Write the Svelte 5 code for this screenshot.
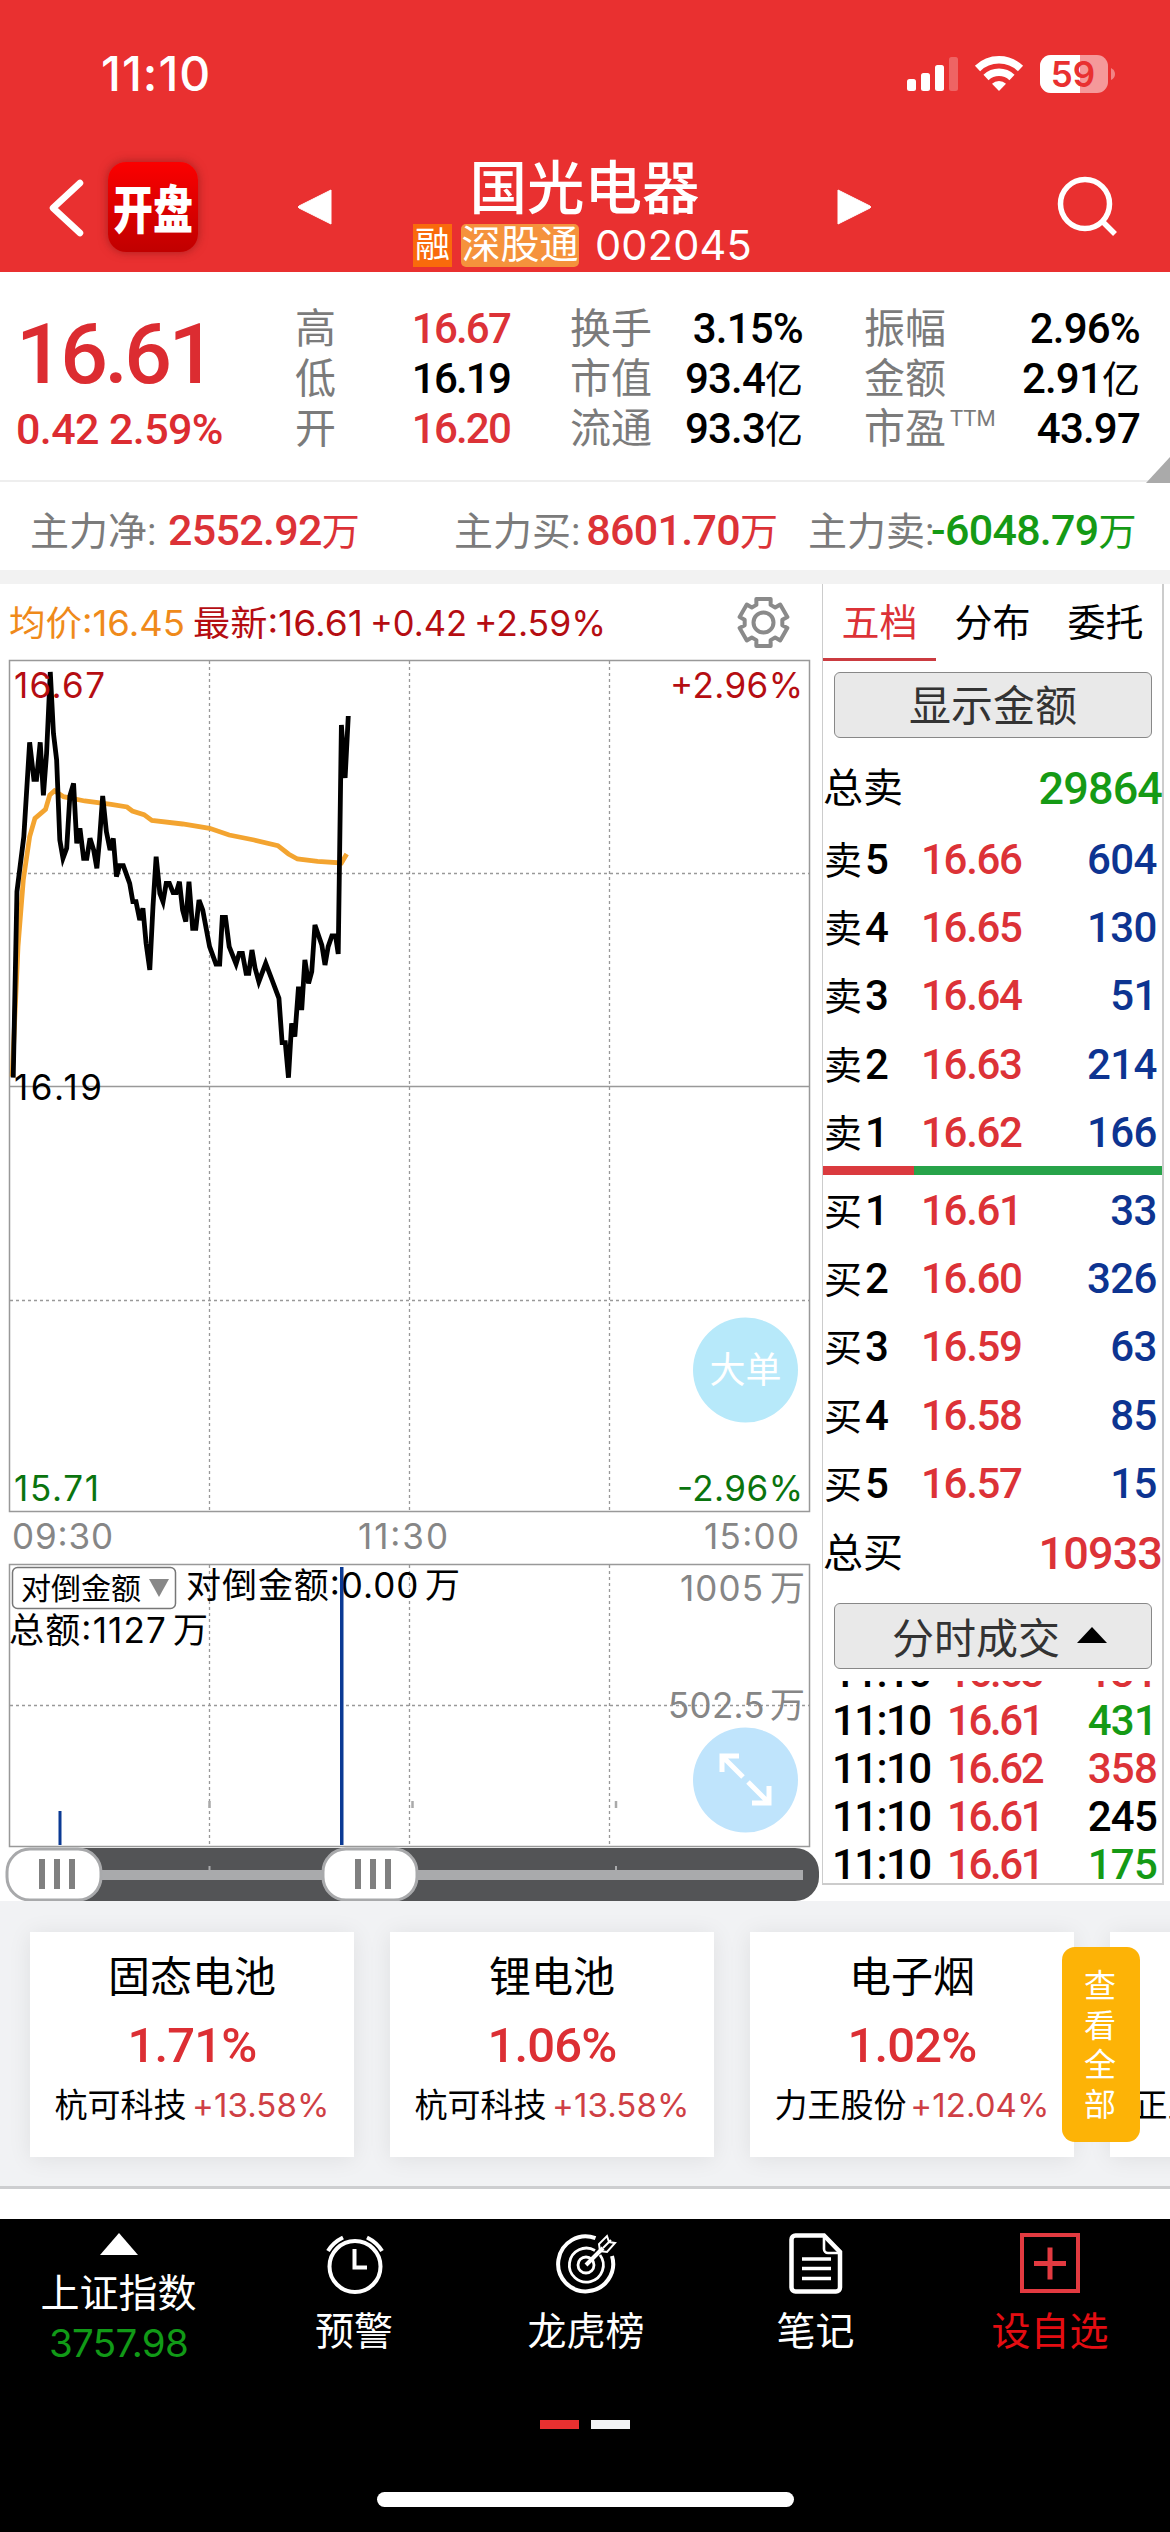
<script lang="ts">
  const quoteColumns = [
    [
      { label: "高", value: "16.67", tone: "up" },
      { label: "低", value: "16.19", tone: "" },
      { label: "开", value: "16.20", tone: "up" },
    ],
    [
      { label: "换手", value: "3.15%", tone: "" },
      { label: "市值", value: "93.4", unit: "亿", tone: "" },
      { label: "流通", value: "93.3", unit: "亿", tone: "" },
    ],
    [
      { label: "振幅", value: "2.96%", tone: "" },
      { label: "金额", value: "2.91", unit: "亿", tone: "" },
      { label: "市盈", sup: "TTM", value: "43.97", tone: "" },
    ],
  ];

  const sells = [
    ["5", "16.66", "604"],
    ["4", "16.65", "130"],
    ["3", "16.64", "51"],
    ["2", "16.63", "214"],
    ["1", "16.62", "166"],
  ];

  const buys = [
    ["1", "16.61", "33"],
    ["2", "16.60", "326"],
    ["3", "16.59", "63"],
    ["4", "16.58", "85"],
    ["5", "16.57", "15"],
  ];

  const trades = [
    { time: "11:10", price: "16.63", qty: "131", tone: "up" },
    { time: "11:10", price: "16.61", qty: "431", tone: "down" },
    { time: "11:10", price: "16.62", qty: "358", tone: "up" },
    { time: "11:10", price: "16.61", qty: "245", tone: "" },
    { time: "11:10", price: "16.61", qty: "175", tone: "down" },
  ];

  const sectors = [
    { name: "固态电池", pct: "1.71%", stock: "杭可科技", change: "+13.58%" },
    { name: "锂电池", pct: "1.06%", stock: "杭可科技", change: "+13.58%" },
    { name: "电子烟", pct: "1.02%", stock: "力王股份", change: "+12.04%" },
    { name: "", pct: "", stock: "正业科技", change: "" },
  ];

  // 6.3 units on x is one minute of trading
  const price =
    "25,1493 32,935 45,770 56,487 64,598 69,598 76,487 82,646 88,520 95,276 101,460 107,540 113,780 119,835 126,805 132,648 139,610 145,790 151,745 158,835 164,835 170,775 177,810 183,865 188,780 194,648 201,755 208,810 214,775 220,890 226,857 233,857 245,910 251,965 257,965 264,1020 270,985 276,1090 283,1170 289,980 295,830 302,940 308,965 314,910 320,910 327,938 333,938 339,905 345,990 351,1025 357,905 364,1045 370,1045 376,960 383,990 396,1100 408,1152 415,1152 420,1012 426,1012 433,1100 446,1152 452,1120 458,1120 465,1180 470,1180 476,1110 482,1165 489,1205 502,1150 514,1200 527,1255 533,1388 539,1388 545,1493 551,1330 557,1370 564,1220 570,1290 576,1140 583,1210 589,1175 595,1035 608,1095 614,1155 620,1100 627,1068 634,1068 639,1122 645,435 652,594 658,408";
  const average =
    "23,1490 34,1100 44,900 56,770 66,715 86,688 94,645 103,632 120,650 160,663 210,673 240,681 250,693 272,704 287,721 345,732 396,745 433,765 480,780 525,797 545,822 562,837 600,844 645,849 655,822";

  function gearPoints(cx: number, cy: number) {
    const out: string[] = [];
    for (let k = 0; k < 6; k++) {
      for (const [r, d] of [[19, -22], [24.5, -17], [24.5, 17], [19, 22]]) {
        const a = ((k * 60 + d - 90) * Math.PI) / 180;
        out.push(`${cx + r * Math.cos(a)},${cy + r * Math.sin(a)}`);
      }
    }
    return out.join(" ");
  }
</script>

<main>
  <header>
    <div class="status">
      <span class="clock">11:10</span>
      <svg class="status-icons" width="210" height="44" viewBox="905 52 210 44">
        <g fill="#fff">
          <rect x="907" y="79" width="9" height="12" rx="2.5" />
          <rect x="921" y="73" width="9" height="18" rx="2.5" />
          <rect x="935" y="65" width="9" height="26" rx="2.5" />
          <rect x="949" y="57" width="9" height="34" rx="2.5" opacity=".25" />
        </g>
        <g fill="none" stroke="#fff" stroke-width="7.5">
          <path d="M977.5 68.5a31 31 0 0 1 43 0" />
          <path d="M986 77.5a19 19 0 0 1 26 0" />
        </g>
        <path fill="#fff" d="M999 91l-7-7.2a10 10 0 0 1 14 0z" />
        <rect x="1040" y="55" width="68" height="38" rx="11" fill="#f5999a" />
        <path fill="#fff" d="M1080 55v38h-29a11 11 0 0 1-11-11v-16a11 11 0 0 1 11-11z" />
        <path fill="#f28384" d="M1111 68q4 2 4 6t-4 6z" />
        <text class="battery" x="1073" y="86.500" text-anchor="middle">59</text>
      </svg>
    </div>
    <div class="title-bar">
      <svg class="back" width="40" height="60" viewBox="0 0 40 60">
        <path d="M35 6L8 31l27 25" fill="none" stroke="#fff" stroke-width="6.500" stroke-linecap="round" stroke-linejoin="round" />
      </svg>
      <span class="kaipan"><b>开盘</b></span>
      <svg class="prev" width="36" height="40" viewBox="0 0 36 40"><path d="M34 3v34L2 21q-1.500-1 0-2z" fill="#fff" stroke="#fff" stroke-linejoin="round" /></svg>
      <div class="stock">
        <h1>国光电器</h1>
        <div class="tags">
          <span class="rong">融</span>
          <span class="sgt">深股通</span>
          <span class="code">002045</span>
        </div>
      </div>
      <svg class="next" width="36" height="40" viewBox="0 0 36 40"><path d="M2 3v34l32-16q1.500-1 0-2z" fill="#fff" stroke="#fff" stroke-linejoin="round" /></svg>
      <svg class="search" width="64" height="64" viewBox="0 0 64 64">
        <circle cx="30" cy="28" r="24.500" fill="none" stroke="#fff" stroke-width="5.500" />
        <path d="M47 45l13 13" stroke="#fff" stroke-width="5.500" />
      </svg>
    </div>
  </header>

  <section class="quote">
    <div class="now">
      <strong>16.61</strong>
      <span>0.42 2.59%</span>
    </div>
    {#each quoteColumns as column}
      <dl>
        {#each column as item}
          <div>
            <dt>{item.label}{#if item.sup}<sup>{item.sup}</sup>{/if}</dt>
            <dd class={item.tone}>{item.value}{#if item.unit}<i>{item.unit}</i>{/if}</dd>
          </div>
        {/each}
      </dl>
    {/each}
    <svg class="corner" width="24" height="26" viewBox="0 0 24 26"><path d="M24 0v26H0z" fill="#aaa" /></svg>
  </section>

  <section class="force">
    <p><span>主力净:</span><b class="up">2552.92<i>万</i></b></p>
    <p><span>主力买:</span><b class="up">8601.70<i>万</i></b></p>
    <p><span>主力卖:</span><b class="down">-6048.79<i>万</i></b></p>
  </section>

  <section class="trading">
    <div class="charts">
      <svg width="822" height="1317" viewBox="0 584 822 1317">
        <g class="legend">
          <text class="orange" x="9" y="636" textLength="176" lengthAdjust="spacingAndGlyphs">均价:16.45</text>
          <text class="crimson" x="193" y="636" textLength="170" lengthAdjust="spacingAndGlyphs">最新:16.61</text>
          <text class="crimson" x="370" y="636" textLength="97" lengthAdjust="spacingAndGlyphs">+0.42</text>
          <text class="crimson" x="474" y="636" textLength="132" lengthAdjust="spacingAndGlyphs">+2.59%</text>
        </g>
        <g fill="none" stroke="#8a8a8a" stroke-width="4" stroke-linejoin="round">
          <polygon points={gearPoints(763.5, 622.5)} />
          <circle cx="763.500" cy="622.500" r="10" />
        </g>

        <g class="frame">
          <rect x="9.500" y="660.500" width="800" height="851" />
          <rect x="9.500" y="1564.500" width="800" height="282" />
          <path d="M10 1086.500H810" />
        </g>
        <g class="dashes">
          <path d="M209.500 661V1511M409.500 661V1511M609.500 661V1511M10 873.500H810M10 1300.500H810" />
          <path d="M209.500 1565V1846M409.500 1565V1846M609.500 1565V1846M10 1705.500H810" />
        </g>

        <g transform="translate(0 580) scale(.5293 .33333)">
          <polyline class="average" points={average} />
          <polyline class="price" points={price} />
        </g>

        <g class="scale">
          <text class="crimson" x="14" y="698" textLength="91">16.67</text>
          <text class="crimson" x="803" y="698" text-anchor="end" textLength="133">+2.96%</text>
          <text x="14" y="1100" textLength="88">16.19</text>
          <text class="green" x="14" y="1501" textLength="85">15.71</text>
          <text class="green" x="803" y="1501" text-anchor="end" textLength="126">-2.96%</text>
          <text class="grey" x="12" y="1549" textLength="101">09:30</text>
          <text class="grey" x="358" y="1549" textLength="90">11:30</text>
          <text class="grey" x="799" y="1549" text-anchor="end" textLength="95">15:00</text>
          <text class="grey wan" x="805" y="1601" text-anchor="end" textLength="125">1005 万</text>
          <text class="grey wan" x="805" y="1718" text-anchor="end" textLength="137">502.5 万</text>
          <text class="wan" x="186" y="1598" textLength="274">对倒金额:0.00 万</text>
          <text class="wan" x="9" y="1643" textLength="199">总额:1127 万</text>
        </g>
        <rect class="select" x="12.500" y="1567.500" width="163" height="41" rx="5" />
        <text class="select-text" x="21" y="1599">对倒金额</text>
        <path d="M149 1579h20l-10 18z" fill="#888" />

        <g fill="#0b3a94">
          <rect x="340" y="1567" width="3.500" height="278" />
          <rect x="58.500" y="1811" width="3" height="34" />
        </g>
        <path d="M209.500 1801v7M412.500 1801v7M616 1801v7" stroke="#aaa" stroke-width="2.500" />

        <circle cx="745.500" cy="1370" r="52.500" fill="#b7e9fa" />
        <text class="bubble" x="745.500" y="1383" text-anchor="middle">大单</text>
        <circle cx="745.500" cy="1780" r="52.500" fill="#bfe4fc" />
        <path d="M743 1777L723 1757M722 1772V1756H739M748 1782L768 1802M769 1786V1803H752" fill="none" stroke="#fff" stroke-width="5" />

        <rect x="8" y="1848" width="811" height="53" rx="24" fill="#535456" />
        <rect x="60" y="1870" width="743" height="10" fill="#a9aaac" />
        <path d="M209.500 1866v5M616 1866v5" stroke="#a9aaac" stroke-width="2" />
        {#each [54, 370] as x}
          <rect x={x - 47} y="1849" width="94" height="51" rx="23" fill="#fff" stroke="#a8a9ab" stroke-width="3" />
          <path d="M{x - 12} 1859v30M{x + 3} 1859v30M{x + 18} 1859v30" stroke="#808080" stroke-width="6" />
        {/each}
      </svg>
    </div>

    <aside>
      <nav class="tabs">
        <span class="active">五档</span>
        <span>分布</span>
        <span>委托</span>
      </nav>
      <button class="toggle">显示金额</button>
      <div class="total"><span>总卖</span><b class="down">29864</b></div>
      {#each sells as [level, p, qty]}
        <div class="level"><span>卖<b>{level}</b></span><b class="up">{p}</b><b class="qty">{qty}</b></div>
      {/each}
      <div class="ratio"></div>
      {#each buys as [level, p, qty]}
        <div class="level"><span>买<b>{level}</b></span><b class="up">{p}</b><b class="qty">{qty}</b></div>
      {/each}
      <div class="total total-buy"><span>总买</span><b class="up">10933</b></div>
      <button class="toggle toggle-trades">分时成交 <svg width="30" height="17" viewBox="0 0 32 18"><path d="M16 0L32 17H0z" /></svg></button>
      <div class="trades">
        {#each trades as t}
          <div class="trade"><b>{t.time}</b><b class="up">{t.price}</b><b class={t.tone}>{t.qty}</b></div>
        {/each}
      </div>
    </aside>
  </section>

  <section class="sectors">
    {#each sectors as s}
      <article>
        <h2>{s.name}</h2>
        <strong>{s.pct}</strong>
        <p><span>{s.stock}</span><em>{s.change}</em></p>
      </article>
    {/each}
    <div class="view-all">查看全部</div>
  </section>

  <div class="gap"></div>

  <footer>
    <div class="index">
      <svg width="38" height="22" viewBox="0 0 38 22"><path d="M19 0l19 22H0z" fill="#fff" /></svg>
      <span>上证指数</span>
      <em>3757.98</em>
    </div>
    <div class="tool">
      <svg width="60" height="62" viewBox="0 0 60 62">
        <g fill="none" stroke="#fff" stroke-width="4">
          <circle cx="31" cy="33.500" r="25.500" />
          <path d="M30.500 16v18.500H43M4 18Q9 9.500 19 4.500M43 4.500Q53 9.500 58 18" />
        </g>
      </svg>
      <span>预警</span>
    </div>
    <div class="tool">
      <svg width="62" height="62" viewBox="0 0 62 62">
        <g fill="none" stroke="#fff">
          <path d="M40.500 5.200A27.500 27.500 0 1 0 57 23" stroke-width="4" />
          <path d="M40 17.500A17 17 0 1 0 45 22" stroke-width="2.800" />
          <circle cx="31" cy="32" r="8" stroke-width="2.800" />
          <path d="M31 32L48 15" stroke-width="4" />
          <path d="M45 18l-1-7 8-8 2 6 6 1-8 9zM48 15l8-8" stroke-width="2" />
        </g>
      </svg>
      <span>龙虎榜</span>
    </div>
    <div class="tool">
      <svg width="54" height="62" viewBox="0 0 54 62">
        <g fill="none" stroke="#fff">
          <path d="M6.500 2.500H35L51 19V54.500a4 4 0 0 1-4 4H6.500a4 4 0 0 1-4-4V6.500a4 4 0 0 1 4-4z" stroke-width="4.500" />
          <path d="M35 4v12a4 4 0 0 0 4 4h11" stroke-width="2.600" />
          <path d="M13 26h29M13 35.500h29M13 45.500h29" stroke-width="3.500" />
        </g>
      </svg>
      <span>笔记</span>
    </div>
    <div class="tool tool-add">
      <svg width="60" height="62" viewBox="0 0 60 62">
        <path d="M2 2h56v56H2z" fill="none" stroke="#e23a40" stroke-width="4" />
        <path d="M14 30.500h32M30 14.500v32" stroke="#e23a40" stroke-width="5" />
      </svg>
      <span>设自选</span>
    </div>
    <div class="pager"><i></i><i></i></div>
    <div class="home"></div>
  </footer>
</main>

<style>
  :global(body) {
    background: #fff;
  }

  main {
    width: 1170px;
    height: 2532px;
    overflow: hidden;
    display: flex;
    flex-direction: column;
    background: #fff;
    color: #000;
    font-family: "Inter", "Noto Sans CJK SC", sans-serif;
  }

  h1,
  h2,
  p,
  dl,
  dd {
    margin: 0;
  }

  i,
  em {
    font-style: normal;
  }

  svg {
    display: block;
    flex: none;
  }

  .up {
    color: #dc3237;
  }

  .down {
    color: #159a15;
  }

  header {
    flex: none;
    height: 272px;
    background: #e93030;
    color: #fff;
  }

  .status {
    height: 152px;
    padding: 0 55px 0 101px;
    display: flex;
    justify-content: space-between;
    align-items: center;
    box-sizing: border-box;
  }

  .clock {
    margin-top: -6px;
    font-size: 48px;
    font-weight: 500;
    letter-spacing: 1px;
  }

  .status-icons {
    margin-top: -4px;
  }

  .battery {
    font: 600 35px "Inter", sans-serif;
    fill: #e93030;
  }

  .title-bar {
    height: 120px;
    display: flex;
    align-items: flex-start;
  }

  .back {
    margin: 25px 0 0 45px;
  }

  .kaipan {
    width: 90px;
    height: 90px;
    margin: 10px 0 0 23px;
    border-radius: 18px;
    background: linear-gradient(#fb0000, #c00000);
    box-shadow: 0 0 10px rgba(120, 20, 20, 0.6);
    display: flex;
    align-items: center;
    justify-content: center;
  }

  .kaipan b {
    font-size: 40px;
    font-weight: 900;
    transform: scaleY(1.3);
  }

  .prev {
    margin: 35px 0 0 99px;
  }

  .stock {
    width: 503px;
    display: flex;
    flex-direction: column;
    align-items: center;
  }

  h1 {
    margin-top: 1px;
    font-size: 57.5px;
    line-height: 70px;
    font-weight: 500;
  }

  .tags {
    margin-left: -4px;
    margin-top: 1px;
    display: flex;
    font-size: 39px;
    line-height: 40px;
  }

  .rong {
    width: 39px;
    background: #f96a0c;
    font-size: 35px;
    text-align: center;
  }

  .sgt {
    width: 118px;
    margin-left: 9px;
    border-radius: 5px;
    background: #f5923c;
    text-align: center;
  }

  .code {
    margin-left: 16px;
    font-size: 41.5px;
    line-height: 43px;
    letter-spacing: 0.2px;
  }

  .next {
    margin-top: 35px;
  }

  .search {
    margin: 24px 0 0 183px;
  }

  .quote {
    position: relative;
    flex: none;
    height: 210px;
    display: flex;
    align-items: flex-start;
    border-bottom: 2px solid #eee;
    box-sizing: border-box;
    font-family: "Roboto", "Noto Sans CJK SC", sans-serif;
  }

  .now {
    width: 295px;
    padding: 34px 0 0 16px;
    box-sizing: border-box;
    display: flex;
    flex-direction: column;
    color: #dc2c31;
  }

  .now strong {
    font-size: 84px;
    line-height: 98px;
    font-weight: 500;
    letter-spacing: -3.5px;
  }

  .now span {
    font-size: 43px;
    line-height: 50px;
    font-weight: 500;
    letter-spacing: -0.6px;
  }

  dl {
    width: 215px;
    margin: 32px 0 0;
  }

  dl:nth-of-type(2) {
    width: 233px;
    margin-left: 60px;
  }

  dl:nth-of-type(3) {
    width: 276px;
    margin-left: 61px;
  }

  dl div {
    display: flex;
    justify-content: space-between;
    height: 50px;
    line-height: 50px;
    font-size: 42px;
  }

  dt {
    font-size: 41px;
    color: #7b7b7b;
  }

  dd {
    font-weight: 500;
    letter-spacing: -0.8px;
  }

  dl:first-of-type dd {
    letter-spacing: -1.8px;
  }

  dd i,
  .force i {
    font-weight: 400;
    font-size: 38px;
    letter-spacing: 0;
  }

  sup {
    margin-left: 4px;
    font-size: 22px;
    line-height: 1;
    vertical-align: 17px;
  }

  .corner {
    position: absolute;
    right: 0;
    bottom: -3px;
  }

  .force {
    flex: none;
    height: 88px;
    display: flex;
    align-items: center;
    padding-top: 3px;
    box-sizing: border-box;
    font-family: "Roboto", "Noto Sans CJK SC", sans-serif;
    font-size: 43px;
  }

  .force p {
    display: flex;
    align-items: baseline;
    width: 424px;
    padding-left: 30px;
    box-sizing: border-box;
  }

  .force p:nth-child(2) {
    width: 354px;
  }

  .force p:nth-child(3) {
    width: 392px;
  }

  .force span {
    width: 138px;
    font-size: 39px;
    color: #7b7b7b;
  }

  .force p:nth-child(3) span {
    width: 123px;
    white-space: nowrap;
  }

  .force b {
    font-weight: 500;
    white-space: nowrap;
    letter-spacing: -0.7px;
  }

  .trading {
    flex: none;
    height: 1331px;
    border-top: 14px solid #f2f2f2;
    box-sizing: border-box;
    display: flex;
  }

  .charts {
    width: 822px;
  }

  .charts text {
    font-family: "Inter", "Noto Sans CJK SC", sans-serif;
  }

  .legend text,
  .scale text {
    font-size: 35px;
  }

  .charts .wan {
    word-spacing: -5px;
  }

  .charts .orange {
    fill: #ef8a1a;
  }

  .charts .crimson {
    fill: #b50d12;
  }

  .charts .green {
    fill: #0a740e;
  }

  .charts .grey {
    fill: #868686;
  }

  .charts .select-text {
    font-size: 30px;
  }

  .charts .bubble {
    font-size: 36px;
    fill: #fff;
  }

  .frame {
    fill: none;
    stroke: #999;
    stroke-width: 1.5;
  }

  .dashes {
    fill: none;
    stroke: #999;
    stroke-width: 1.3;
    stroke-dasharray: 3 3;
  }

  .select {
    fill: none;
    stroke: #777;
    stroke-width: 1.5;
  }

  .price,
  .average {
    fill: none;
    stroke: #000;
    stroke-width: 4.8;
    stroke-linejoin: miter;
    vector-effect: non-scaling-stroke;
  }

  .average {
    stroke: #f3a430;
  }

  aside {
    width: 342px;
    height: 1301px;
    border: 1px solid #ccc;
    border-width: 0 2px 2px 1px;
    box-sizing: border-box;
    display: flex;
    flex-direction: column;
    font-family: "Roboto", "Noto Sans CJK SC", sans-serif;
  }

  .tabs {
    flex: none;
    display: flex;
    height: 77px;
    font-size: 38px;
    line-height: 79px;
  }

  .tabs span {
    width: 114px;
    text-align: center;
  }

  .tabs .active {
    color: #dc3237;
    border-bottom: 3px solid #cb3b40;
    box-sizing: border-box;
  }

  .toggle {
    flex: none;
    width: 318px;
    height: 66px;
    margin: 11px 0 0 11px;
    padding: 0 0 4px;
    border: 1.5px solid #888;
    border-radius: 6px;
    background: #e9e9e9;
    color: #333;
    font: 42px/58px "Noto Sans CJK SC", sans-serif;
  }

  .total {
    flex: none;
    display: flex;
    justify-content: space-between;
    height: 72px;
    margin-top: 15px;
    line-height: 71px;
    font-size: 40px;
  }

  .total b {
    font-weight: 500;
    font-size: 45px;
    letter-spacing: -0.9px;
  }

  .level {
    flex: none;
    display: grid;
    grid-template-columns: 97px 120px 1fr;
    height: 68.2px;
    padding: 0 5px 0 1px;
    line-height: 70px;
    font-size: 42px;
  }

  .level span {
    font-size: 38px;
  }

  .level b {
    font-weight: 500;
    letter-spacing: -0.5px;
  }

  .level .up {
    letter-spacing: -1.3px;
  }

  .level span b {
    margin-left: 3px;
    font-size: 42px;
  }

  .level .qty {
    color: #0d3491;
    text-align: right;
  }

  .ratio {
    flex: none;
    height: 9px;
    margin-bottom: 1px;
    background: linear-gradient(90deg, #da3a3e 91px, #27a349 91px);
  }

  .total-buy {
    margin-top: 1px;
  }

  .toggle-trades {
    margin-top: 13px;
    padding: 0 0 0 13px;
    display: flex;
    align-items: center;
    justify-content: center;
    gap: 17px;
  }

  .trades {
    flex: none;
    height: 202px;
    margin-top: 12px;
    overflow: hidden;
    display: flex;
    flex-direction: column;
    justify-content: flex-end;
  }

  .trade {
    flex: none;
    display: grid;
    grid-template-columns: 115px 120px 1fr;
    height: 48px;
    padding: 0 5px 0 9px;
    line-height: 59px;
    font-size: 42px;
  }

  .trade b {
    font-weight: 500;
    letter-spacing: -0.8px;
  }

  .trade b:first-child {
    letter-spacing: -1.6px;
  }

  .trade b:nth-child(2) {
    letter-spacing: -2.4px;
  }

  .trade b:last-child {
    text-align: right;
  }

  .sectors {
    position: relative;
    flex: none;
    height: 288px;
    padding: 31px 0 0 30px;
    border-bottom: 3px solid #cdced0;
    box-sizing: border-box;
    background: #f1f2f4;
    display: flex;
    gap: 36px;
    overflow: hidden;
  }

  article {
    flex: none;
    width: 324px;
    height: 225px;
    background: #fff;
    box-shadow: 0 2px 22px rgba(0, 0, 0, 0.08);
    display: flex;
    flex-direction: column;
    align-items: center;
    white-space: nowrap;
  }

  h2 {
    height: 60px;
    margin-top: 15px;
    font-size: 42px;
    line-height: 60px;
    font-weight: 400;
  }

  article strong {
    height: 60px;
    margin-top: 9px;
    font: 500 49px/60px "Roboto", sans-serif;
    letter-spacing: -0.8px;
    color: #dc2f34;
  }

  article p {
    width: 275px;
    margin-top: 4px;
    display: flex;
    justify-content: space-between;
    font-size: 33px;
    line-height: 50px;
  }

  article em {
    color: #cf3f45;
    letter-spacing: 0.1px;
  }

  .view-all {
    position: absolute;
    left: 1062px;
    top: 46px;
    width: 78px;
    height: 195px;
    padding: 19px 22px 0;
    box-sizing: border-box;
    border-radius: 13px;
    background: #fdb306;
    color: #fff;
    font-size: 32px;
    line-height: 39.5px;
    word-break: break-all;
  }

  .gap {
    flex: none;
    height: 30px;
    background: #fff;
  }

  footer {
    position: relative;
    flex: 1;
    display: grid;
    grid-template-columns: 237px 234px 230px 229px 240px;
    grid-template-rows: 201px 72px 1fr;
    background: #000;
    color: #fff;
    font-size: 39px;
  }

  .index,
  .tool {
    display: flex;
    flex-direction: column;
    align-items: center;
    line-height: 50px;
  }

  .index {
    padding-top: 14px;
  }

  .index span {
    margin-top: 13px;
  }

  .index em {
    color: #119a17;
    font-size: 38.5px;
    letter-spacing: -0.7px;
  }

  .tool {
    padding-top: 14px;
  }

  .tool span {
    margin-top: 11px;
  }

  .tool-add span {
    color: #e40d12;
  }

  .pager {
    grid-column: 1 / -1;
    display: flex;
    justify-content: center;
    gap: 12px;
  }

  .pager i {
    width: 39px;
    height: 9px;
    background: #f3f4f6;
  }

  .pager i:first-child {
    background: #e93030;
  }

  .home {
    grid-column: 1 / -1;
    justify-self: center;
    width: 417px;
    height: 15px;
    border-radius: 8px;
    background: #fff;
  }
</style>
